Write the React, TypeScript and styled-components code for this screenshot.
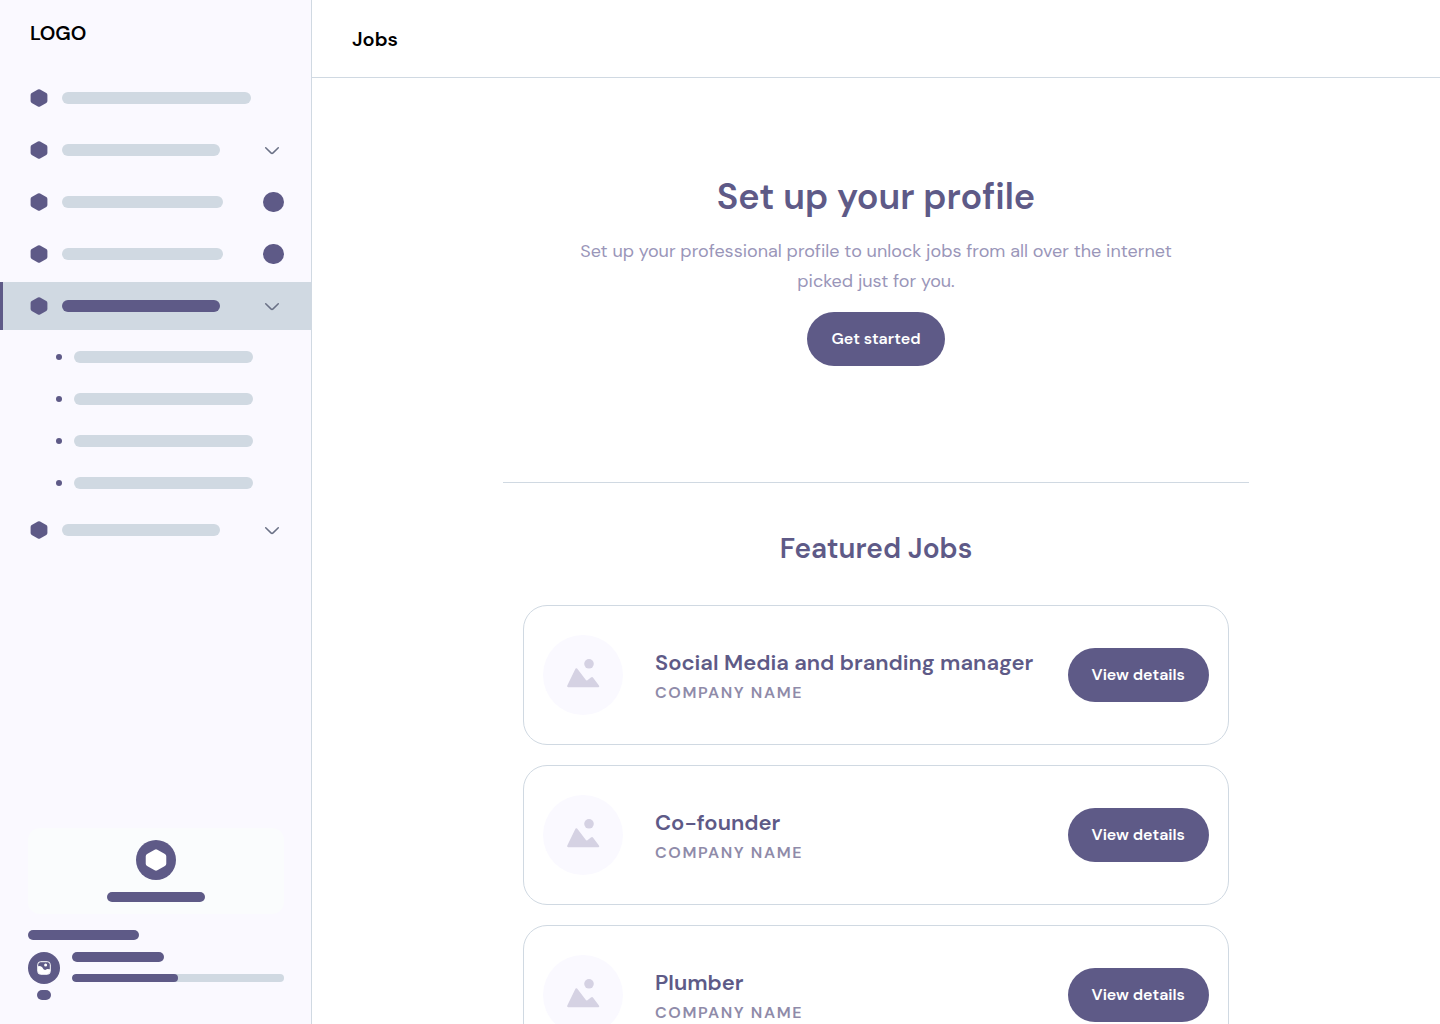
import React from "react";
import styled, { createGlobalStyle } from "styled-components";

const color = {
  primary: "#5e5a87",
  muted: "#9a96b9",
  caption: "#8f8ba9",
  line: "#d0d9e2",
  tint: "#faf9ff",
  panel: "#fafcfd",
  art: "#d5d2e3",
  chevron: "#6a7186",
};

const GlobalStyle = createGlobalStyle`
  *, *::before, *::after { box-sizing: border-box; }
  body {
    margin: 0;
    background: #fff;
    color: #000;
    font-family: "DM Sans", Inter, "Liberation Sans", sans-serif;
    font-variant-ligatures: none;
  }
  h1, h2, h3, p, ul { margin: 0; padding: 0; }
  ul { list-style: none; }
  button { font: inherit; border: 0; cursor: pointer; }
`;

const Shell = styled.div`
  display: grid;
  grid-template-columns: 312px minmax(0, 1fr);
  height: 100vh;
`;

const Sidebar = styled.aside`
  display: flex;
  flex-direction: column;
  justify-content: space-between;
  min-height: 0;
  overflow: hidden;
  background: ${color.tint};
  border-right: 1px solid ${color.line};
`;

const Logo = styled.div`
  padding: 20px 30px 28px;
  font-size: 20px;
  line-height: 26px;
  font-weight: 600;
`;

const NavList = styled.ul`
  display: flex;
  flex-direction: column;
  gap: 4px;
`;

const NavItem = styled.button<{ $active?: boolean }>`
  display: flex;
  align-items: center;
  gap: 14px;
  width: 100%;
  height: 48px;
  padding: 0 27px;
  border-left: 3px solid ${(p) => (p.$active ? color.primary : "transparent")};
  background: ${(p) => (p.$active ? color.line : "transparent")};
`;

const Bar = styled.span<{ $width: number; $height?: number; $dark?: boolean }>`
  display: block;
  width: ${(p) => p.$width}px;
  height: ${(p) => p.$height ?? 12}px;
  border-radius: 6px;
  background: ${(p) => (p.$dark ? color.primary : color.line)};
`;

const NavIcon = styled.svg`
  flex: none;
  width: 18px;
  height: 18px;
  fill: ${color.primary};
`;

const Trailing = styled.span`
  display: flex;
  justify-content: flex-end;
  margin-left: auto;
`;

const CountDot = styled.span`
  width: 21px;
  height: 20px;
  border-radius: 10px;
  background: ${color.primary};
`;

const ChevronIcon = styled.svg`
  width: 24px;
  height: 24px;
  fill: none;
  stroke: ${color.chevron};
  stroke-width: 1.5;
  stroke-linecap: round;
  stroke-linejoin: round;
`;

const SubList = styled.ul`
  display: flex;
  flex-direction: column;
  gap: 4px;
  padding-top: 8px;
`;

const SubItem = styled.button`
  display: flex;
  align-items: center;
  gap: 12px;
  width: 100%;
  height: 38px;
  padding: 0 56px;
  background: transparent;
`;

const Bullet = styled.span`
  flex: none;
  width: 6px;
  height: 6px;
  border-radius: 50%;
  background: ${color.primary};
`;

const SidebarFooter = styled.div`
  display: flex;
  flex-direction: column;
  padding: 0 27px 24px 28px;
`;

const Promo = styled.button`
  display: flex;
  flex-direction: column;
  align-items: center;
  gap: 12px;
  margin-bottom: 16px;
  padding: 12px;
  border-radius: 12px;
  background: ${color.panel};
`;

const Round = styled.span<{ $size: number }>`
  display: flex;
  align-items: center;
  justify-content: center;
  width: ${(p) => p.$size}px;
  height: ${(p) => p.$size}px;
  border-radius: 50%;
  background: ${color.primary};
`;

const Account = styled.div`
  display: flex;
  gap: 12px;
  margin-top: 12px;
`;

const AvatarColumn = styled.div`
  display: flex;
  flex-direction: column;
  align-items: center;
  gap: 6px;
`;

const AccountDetails = styled.div`
  display: flex;
  flex: 1;
  flex-direction: column;
  gap: 12px;
`;

const Track = styled.div`
  height: 8px;
  border-radius: 4px;
  background: ${color.line};
  overflow: hidden;
`;

const Fill = styled.div`
  height: 100%;
  border-radius: 4px;
  background: ${color.primary};
`;

const Page = styled.div`
  display: flex;
  flex-direction: column;
  min-width: 0;
  min-height: 0;
`;

const TopBar = styled.header`
  flex: none;
  padding: 26px 40px 25px;
  border-bottom: 1px solid ${color.line};
`;

const PageTitle = styled.h1`
  font-size: 20px;
  line-height: 26px;
  font-weight: 600;
`;

const Content = styled.main`
  flex: 1;
  min-height: 0;
  overflow-y: auto;
  scrollbar-width: none;
`;

const Column = styled.div`
  max-width: 746px;
  margin: 0 auto;
  padding-bottom: 40px;
`;

const Hero = styled.section`
  display: flex;
  flex-direction: column;
  align-items: center;
  padding: 94px 60px 116px;
  border-bottom: 1px solid ${color.line};
  text-align: center;
`;

const HeroTitle = styled.h2`
  color: ${color.primary};
  font-size: 36px;
  line-height: 50px;
  font-weight: 600;
`;

const HeroText = styled.p`
  margin: 14px 0 16px;
  color: ${color.muted};
  font-size: 18px;
  line-height: 30px;
`;

const PillButton = styled.button`
  flex: none;
  padding: 16px 24px;
  border-radius: 27px;
  background: ${color.primary};
  color: #fff;
  font-size: 16px;
  line-height: 22px;
  font-weight: 600;
`;

const Featured = styled.section`
  padding: 48px 20px 0;
`;

const SectionTitle = styled.h2`
  margin-bottom: 38px;
  color: ${color.primary};
  font-size: 28px;
  line-height: 36px;
  font-weight: 600;
  text-align: center;
`;

const JobList = styled.ul`
  display: flex;
  flex-direction: column;
  gap: 20px;
`;

const JobCard = styled.li`
  display: flex;
  align-items: center;
  gap: 32px;
  min-height: 140px;
  padding: 0 19px;
  border: 1px solid ${color.line};
  border-radius: 24px;
`;

const JobPicture = styled.div`
  display: flex;
  flex: none;
  align-items: center;
  justify-content: center;
  width: 80px;
  height: 80px;
  border-radius: 50%;
  background: ${color.tint};
`;

const JobText = styled.div`
  flex: 1;
  min-width: 0;
  padding-top: 2px;
`;

const JobTitle = styled.h3`
  color: ${color.primary};
  font-size: 22px;
  line-height: 34px;
  font-weight: 600;
  white-space: nowrap;
`;

const Company = styled.p`
  color: ${color.caption};
  font-size: 16px;
  line-height: 26px;
  font-weight: 600;
  letter-spacing: 0.1em;
  text-transform: uppercase;
`;

const HEXAGON =
  "M7.9.6a2.2 2.2 0 0 1 2.2 0l6.2 3.5a2.2 2.2 0 0 1 1.1 1.9v6a2.2 2.2 0 0 1-1.1 1.9l-6.2 3.5a2.2 2.2 0 0 1-2.2 0l-6.2-3.5A2.2 2.2 0 0 1 .6 12V6a2.2 2.2 0 0 1 1.1-1.9z";

function Chevron() {
  return (
    <ChevronIcon viewBox="0 0 24 24" aria-hidden="true">
      <path d="M5.7 9.7l5.5 5.4a1.1 1.1 0 0 0 1.6 0l5.5-5.4" />
    </ChevronIcon>
  );
}

function Landscape() {
  return (
    <svg width="34" height="32" viewBox="0 0 34 32" fill={color.art} aria-hidden="true">
      <circle cx="23" cy="4.8" r="4.8" />
      <path d="M1.3 26.5 9.2 10.2a1.3 1.3 0 0 1 2.3-.3l8.4 11.2a1 1 0 0 0 1.5.1l3.5-2.7a1.7 1.7 0 0 1 2.4.4l5.8 7.9a.9.9 0 0 1-.7 1.4H2.2a1.2 1.2 0 0 1-.9-1.7z" />
    </svg>
  );
}

function PhotoIcon() {
  return (
    <svg width="14" height="14" viewBox="0 0 14 14" aria-hidden="true">
      <rect x=".7" y=".7" width="12.6" height="12.6" rx="3" fill={color.primary} stroke="#fff" />
      <path d="M1 5.2 3 4.9l2 1.2 1.8 2.4 1.4.6 2-1.2 2.8.4v2.5a2.2 2.2 0 0 1-2.2 2.2H3.2A2.2 2.2 0 0 1 1 10.8z" fill="#fff" />
      <circle cx="8.6" cy="4.1" r="1.5" fill="#fff" />
    </svg>
  );
}

type Entry = {
  id: string;
  width: number;
  trailing?: "chevron" | "dot";
  active?: boolean;
  children?: number[];
};

const entries: Entry[] = [
  { id: "a", width: 189 },
  { id: "b", width: 158, trailing: "chevron" },
  { id: "c", width: 161, trailing: "dot" },
  { id: "d", width: 161, trailing: "dot" },
  { id: "e", width: 158, trailing: "chevron", active: true, children: [179, 179, 179, 179] },
  { id: "f", width: 158, trailing: "chevron" },
];

const jobs = ["Social Media and branding manager", "Co-founder", "Plumber"];

export default function App() {
  const progress = 50;
  return (
    <>
      <GlobalStyle />
      <Shell>
        <Sidebar>
          <nav>
            <Logo>LOGO</Logo>
            <NavList>
              {entries.map((entry) => (
                <li key={entry.id}>
                  <NavItem type="button" $active={entry.active}>
                    <NavIcon viewBox="0 0 18 18" aria-hidden="true">
                      <path d={HEXAGON} />
                    </NavIcon>
                    <Bar $width={entry.width} $dark={entry.active} />
                    <Trailing>
                      {entry.trailing === "chevron" && <Chevron />}
                      {entry.trailing === "dot" && <CountDot />}
                    </Trailing>
                  </NavItem>
                  {entry.children && (
                    <SubList>
                      {entry.children.map((width, i) => (
                        <li key={i}>
                          <SubItem type="button">
                            <Bullet />
                            <Bar $width={width} />
                          </SubItem>
                        </li>
                      ))}
                    </SubList>
                  )}
                </li>
              ))}
            </NavList>
          </nav>
          <SidebarFooter>
            <Promo type="button">
              <Round $size={40}>
                <svg width="22" height="22" viewBox="0 0 18 18" fill="#fff" aria-hidden="true">
                  <path d={HEXAGON} />
                </svg>
              </Round>
              <Bar $width={98} $height={10} $dark />
            </Promo>
            <Bar $width={111} $height={10} $dark />
            <Account>
              <AvatarColumn>
                <Round $size={32}>
                  <PhotoIcon />
                </Round>
                <Bar $width={14} $height={10} $dark />
              </AvatarColumn>
              <AccountDetails>
                <Bar $width={92} $height={10} $dark />
                <Track role="progressbar" aria-valuenow={progress} aria-valuemin={0} aria-valuemax={100}>
                  <Fill style={{ width: `${progress}%` }} />
                </Track>
              </AccountDetails>
            </Account>
          </SidebarFooter>
        </Sidebar>
        <Page>
          <TopBar>
            <PageTitle>Jobs</PageTitle>
          </TopBar>
          <Content>
            <Column>
              <Hero>
                <HeroTitle>Set up your profile</HeroTitle>
                <HeroText>
                  Set up your professional profile to unlock jobs from all over the internet picked just for you.
                </HeroText>
                <PillButton type="button">Get started</PillButton>
              </Hero>
              <Featured>
                <SectionTitle>Featured Jobs</SectionTitle>
                <JobList>
                  {jobs.map((title) => (
                    <JobCard key={title}>
                      <JobPicture>
                        <Landscape />
                      </JobPicture>
                      <JobText>
                        <JobTitle>{title}</JobTitle>
                        <Company>Company name</Company>
                      </JobText>
                      <PillButton type="button">View details</PillButton>
                    </JobCard>
                  ))}
                </JobList>
              </Featured>
            </Column>
          </Content>
        </Page>
      </Shell>
    </>
  );
}
